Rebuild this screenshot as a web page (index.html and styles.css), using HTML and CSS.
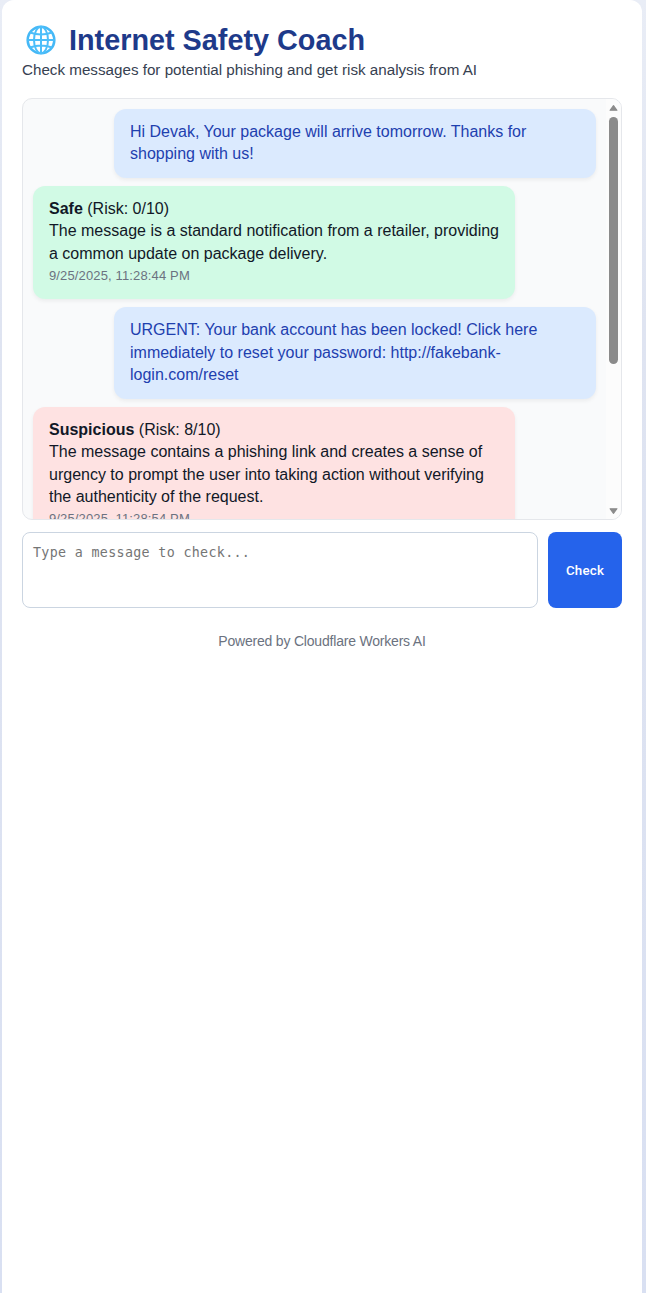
FILE: index.html
```html
<!DOCTYPE html>
<html lang="en">
<head>
<meta charset="utf-8">
<title>Internet Safety Coach</title>
<link rel="stylesheet" href="styles.css">
</head>
<body>
<main class="app">
  <header class="header">
    <h1 class="title">
      <svg class="globe" viewBox="0 0 30 30" fill="none" aria-hidden="true">
        <circle cx="15" cy="15" r="13.3" fill="#fff" stroke="#45b8f6" stroke-width="2.6"/>
        <g stroke="#4cbefa" stroke-width="2">
          <ellipse cx="15" cy="15" rx="7" ry="13.3"/>
          <path d="M15 1.500v27M1.500 15h27M4 7.500Q15 11.500 26 7.500M4 22.500Q15 18.500 26 22.500"/>
        </g>
      </svg>
      <span>Internet Safety Coach</span>
    </h1>
    <p class="subtitle">Check messages for potential phishing and get risk analysis from AI</p>
  </header>
  <section class="chat">
    <div class="messages">
      <div class="bubble user">Hi Devak, Your package will arrive tomorrow. Thanks for shopping with us!</div>
      <div class="bubble safe"><strong>Safe</strong> (Risk: 0/10)<br>The message is a standard notification from a retailer, providing a common update on package delivery.<div class="time">9/25/2025, 11:28:44 PM</div></div>
      <div class="bubble user">URGENT: Your bank account has been locked! Click here immediately to reset your password: http://fakebank-login.com/reset</div>
      <div class="bubble suspicious"><strong>Suspicious</strong> (Risk: 8/10)<br>The message contains a phishing link and creates a sense of urgency to prompt the user into taking action without verifying the authenticity of the request.<div class="time">9/25/2025, 11:28:54 PM</div></div>
    </div>
    <div class="scrollbar" aria-hidden="true">
      <svg class="arrow" viewBox="0 0 9 7"><path d="M4.500 1.500L7.500 5.500H1.500Z"/></svg>
      <div class="track"><div class="thumb"></div></div>
      <svg class="arrow" viewBox="0 0 9 7"><path d="M4.500 5.500L7.500 1.500H1.500Z"/></svg>
    </div>
  </section>
  <form class="composer">
    <textarea class="input" placeholder="Type a message to check..."></textarea>
    <button class="check" type="button">Check</button>
  </form>
  <footer class="footer">Powered by Cloudflare Workers AI</footer>
</main>
</body>
</html>
```
FILE: styles.css
```css
* { box-sizing: border-box; }
body {
  margin: 0;
  height: 1293px;
  overflow: hidden;
  display: flex;
  justify-content: center;
  padding: 0 4px 0 2px;
  background: linear-gradient(#e9edf6, #dfe4f1 25%, #d9e0f2);
  font-family: "Liberation Sans", Arial, sans-serif;
  color: #111827;
}
.app {
  width: 640px;
  height: 1310px;
  flex: none;
  padding: 22px 20px;
  background: #fff;
  border-radius: 12px;
  display: flex;
  flex-direction: column;
}
.header { height: 76px; flex: none; }
.title {
  margin: 0;
  height: 36px;
  display: flex;
  align-items: center;
  gap: 13px;
  padding-left: 4px;
  font-size: 28.8px;
  line-height: 36px;
  color: #1e3a8a;
}
.globe { width: 30px; height: 30px; }
.subtitle {
  margin: 0;
  padding-top: 1px;
  font-size: 15.2px;
  line-height: 21px;
  color: #374151;
}
.chat {
  height: 422px;
  flex: none;
  display: flex;
  justify-content: space-between;
  border: 1px solid #e5e7eb;
  border-radius: 10px;
  background: #f9fafb;
  overflow: hidden;
}
.messages {
  width: 583px;
  padding: 10px;
  display: flex;
  flex-direction: column;
  gap: 8.2px;
}
.bubble {
  width: 482px;
  flex: none;
  padding: 12px 16px;
  border-radius: 12px;
  font-size: 16px;
  line-height: 22.4px;
  box-shadow: 0 2px 4px rgba(0, 0, 0, .06);
}
.user { align-self: flex-end; background: #dbeafe; color: #1e40af; }
.safe { background: #d1fae5; }
.suspicious { background: #fee2e2; }
.time {
  margin-top: 2px;
  padding-bottom: 2px;
  font-size: 13px;
  letter-spacing: .14px;
  line-height: 18px;
  color: #6b7280;
}
.scrollbar {
  width: 15px;
  padding: 5px 0 4px;
  display: flex;
  flex-direction: column;
  align-items: center;
  background: #fcfcfc;
}
.arrow { width: 11px; height: 8px; fill: #8b8b8b; stroke: #8b8b8b; stroke-linejoin: round; }
.track { flex: 1; padding-top: 5px; }
.thumb { width: 9px; height: 247px; border-radius: 5px; background: #8b8b8b; }
.composer {
  margin-top: 12px;
  height: 76px;
  flex: none;
  display: flex;
  gap: 10px;
}
.input {
  width: 516px;
  height: 76px;
  padding: 11px 10px;
  border: 1px solid #cbd5e1;
  border-radius: 8px;
  resize: none;
  font: 13.333px/18px "DejaVu Sans Mono", monospace;
  letter-spacing: .33px;
}
.input::placeholder { color: #757575; }
.check {
  width: 74px;
  padding: 0;
  border: 0;
  border-radius: 8px;
  background: #2563eb;
  color: #fff;
  font: 500 13.333px Roboto, sans-serif;
  letter-spacing: .2px;
}
.footer {
  margin-top: 24px;
  text-align: center;
  font-size: 14px;
  letter-spacing: -.2px;
  line-height: 18px;
  color: #6b7280;
}
```
